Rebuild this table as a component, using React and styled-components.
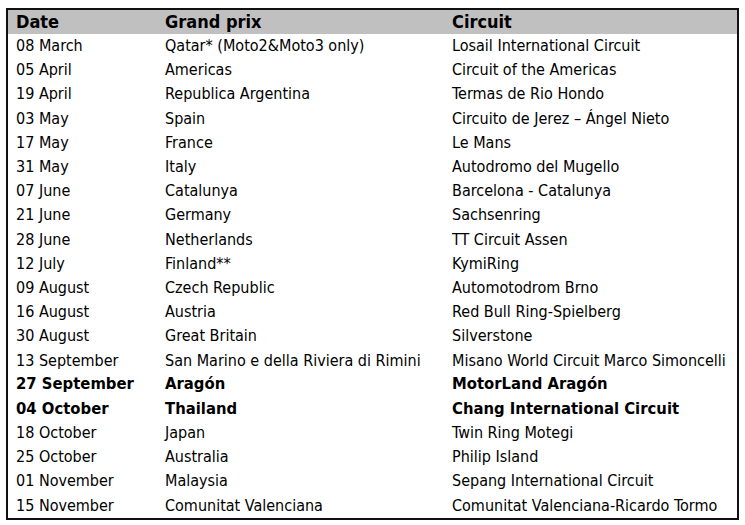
import React from 'react';
import styled, { createGlobalStyle } from 'styled-components';

const GlobalStyle = createGlobalStyle`
  html, body {
    margin: 0;
    padding: 0;
    background: #ffffff;
  }
  body {
    font-family: "DejaVu Sans Condensed", "DejaVu Sans", sans-serif;
    color: #000;
  }
`;

const Page = styled.div`
  padding: 8px 0 0 6px;
`;

const Table = styled.div`
  width: 733px;
  box-sizing: border-box;
  border: 2px solid #111;
  display: grid;
  grid-template-columns: 149px 287px 1fr;
`;

const Cell = styled.div`
  display: flex;
  align-items: center;
  padding-left: 8px;
  height: ${(p) => (p.$head ? '24px' : '24.2px')};
  font-size: ${(p) => (p.$head ? '18px' : p.$bold ? '16.5px' : '16px')};
  font-weight: ${(p) => (p.$head || p.$bold ? 700 : 400)};
  background: ${(p) => (p.$head ? '#c0c0c0' : 'transparent')};
  white-space: nowrap;
  line-height: 1;
`;

const races = [
  ['08 March', 'Qatar* (Moto2&Moto3 only)', 'Losail International Circuit'],
  ['05 April', 'Americas', 'Circuit of the Americas'],
  ['19 April', 'Republica Argentina', 'Termas de Rio Hondo'],
  ['03 May', 'Spain', 'Circuito de Jerez – Ángel Nieto'],
  ['17 May', 'France', 'Le Mans'],
  ['31 May', 'Italy', 'Autodromo del Mugello'],
  ['07 June', 'Catalunya', 'Barcelona - Catalunya'],
  ['21 June', 'Germany', 'Sachsenring'],
  ['28 June', 'Netherlands', 'TT Circuit Assen'],
  ['12 July', 'Finland**', 'KymiRing'],
  ['09 August', 'Czech Republic', 'Automotodrom Brno'],
  ['16 August', 'Austria', 'Red Bull Ring-Spielberg'],
  ['30 August', 'Great Britain', 'Silverstone'],
  ['13 September', 'San Marino e della Riviera di Rimini', 'Misano World Circuit Marco Simoncelli'],
  ['27 September', 'Aragón', 'MotorLand Aragón', true],
  ['04 October', 'Thailand', 'Chang International Circuit', true],
  ['18 October', 'Japan', 'Twin Ring Motegi'],
  ['25 October', 'Australia', 'Philip Island'],
  ['01 November', 'Malaysia', 'Sepang International Circuit'],
  ['15 November', 'Comunitat Valenciana', 'Comunitat Valenciana-Ricardo Tormo'],
];

export default function App() {
  return (
    <Page>
      <GlobalStyle />
      <Table>
        <Cell $head>Date</Cell>
        <Cell $head>Grand prix</Cell>
        <Cell $head>Circuit</Cell>
        {races.map(([date, gp, circuit, bold]) => (
          <React.Fragment key={date}>
            <Cell $bold={bold}>{date}</Cell>
            <Cell $bold={bold}>{gp}</Cell>
            <Cell $bold={bold}>{circuit}</Cell>
          </React.Fragment>
        ))}
      </Table>
    </Page>
  );
}
